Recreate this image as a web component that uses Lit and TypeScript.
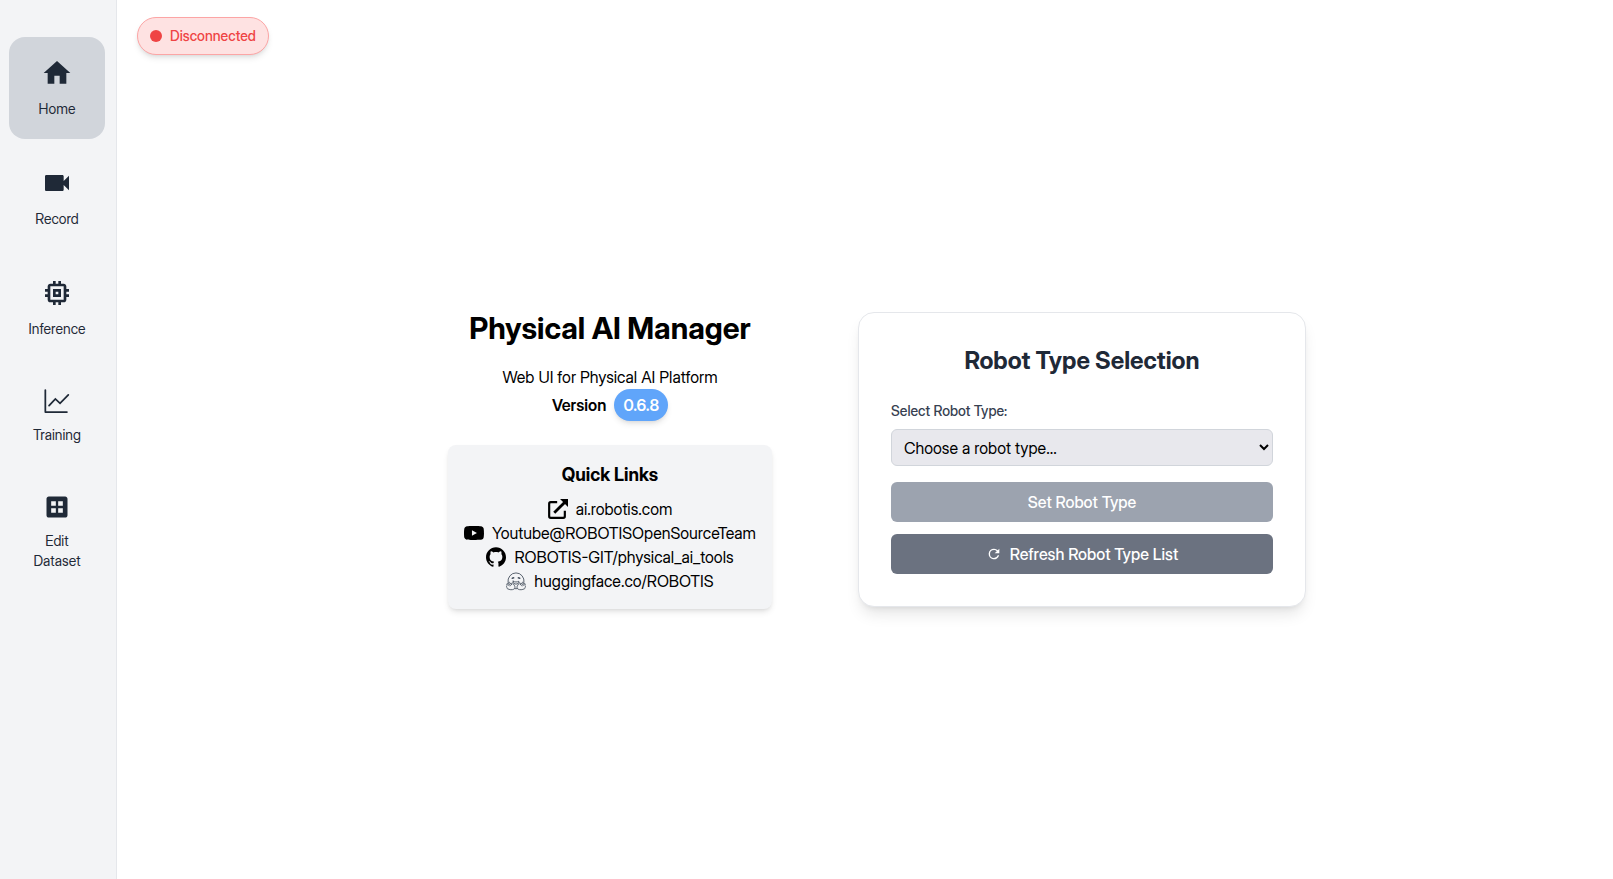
import { LitElement, html, css, svg } from "lit";
import { customElement, property, state } from "lit/decorators.js";
import { classMap } from "lit/directives/class-map.js";

const icons = {
  home: svg`<path d="M10 20v-6h4v6h5v-8h3L12 3 2 12h3v8z"/>`,
  record: svg`<path d="M17 10.500V7c0-.55-.45-1-1-1H4c-.55 0-1 .45-1 1v10c0 .55.45 1 1 1h12c.55 0 1-.45 1-1v-3.500l4 4v-11l-4 4z"/>`,
  inference: svg`<path d="M15 9H9v6h6V9zm-2 4h-2v-2h2v2zm8-2V9h-2V7c0-1.100-.9-2-2-2h-2V3h-2v2h-2V3H9v2H7c-1.100 0-2 .9-2 2v2H3v2h2v2H3v2h2v2c0 1.100.9 2 2 2h2v2h2v-2h2v2h2v-2h2c1.100 0 2-.9 2-2v-2h2v-2h-2v-2h2zm-4 6H7V7h10v10z"/>`,
  training: svg`<path d="M2 2.600V21.500H20.500" fill="none" stroke="currentColor" stroke-width="1.500" stroke-linecap="round" stroke-linejoin="round"/><path d="M5.200 16 10.600 10.200 14.600 14 21.700 6.700" fill="none" stroke="currentColor" stroke-width="1.500" stroke-linecap="round"/>`,
  dataset: svg`<path d="M19 3H5c-1.100 0-2 .9-2 2v14c0 1.100.9 2 2 2h14c1.100 0 2-.9 2-2V5c0-1.100-.9-2-2-2zm-8 14H7v-4h4v4zm0-6H7V7h4v4zm6 6h-4v-4h4v4zm0-6h-4V7h4v4z"/>`,
  external: svg`<path d="M11 3.800H3.200A1.800 1.800 0 0 0 1.400 5.600V20.800A1.800 1.800 0 0 0 3.200 22.600H18.400A1.800 1.800 0 0 0 20.200 20.800V14" fill="none" stroke="currentColor" stroke-width="2.600"/><path d="M7.500 16.500 20.500 3.500" stroke="currentColor" stroke-width="3.400" fill="none"/><path d="M14.500 0H24V9.500z"/>`,
  youtube: svg`<path d="M23.500 6.200a3 3 0 0 0-2.100-2.100C19.500 3.550 12 3.550 12 3.550s-7.500 0-9.400.5A3 3 0 0 0 .5 6.200C0 8.070 0 12 0 12s0 3.930.5 5.800a3 3 0 0 0 2.100 2.100c1.900.55 9.400.55 9.400.55s7.500 0 9.400-.5a3 3 0 0 0 2.100-2.150C24 15.930 24 12 24 12s0-3.930-.5-5.800zM9.550 15.200V8.800L15.500 12z"/>`,
  github: svg`<path d="M12 .297c-6.630 0-12 5.373-12 12 0 5.303 3.438 9.800 8.205 11.385.6.113.82-.258.82-.577 0-.285-.01-1.040-.015-2.040-3.338.724-4.042-1.610-4.042-1.610C4.422 18.070 3.633 17.700 3.633 17.700c-1.087-.744.084-.729.084-.729 1.205.084 1.838 1.236 1.838 1.236 1.070 1.835 2.809 1.305 3.495.998.108-.776.417-1.305.76-1.605-2.665-.3-5.466-1.332-5.466-5.930 0-1.310.465-2.380 1.235-3.220-.135-.303-.54-1.523.105-3.176 0 0 1.005-.322 3.300 1.230.96-.267 1.980-.399 3-.405 1.020.006 2.040.138 3 .405 2.280-1.552 3.285-1.230 3.285-1.230.645 1.653.24 2.873.12 3.176.765.84 1.230 1.910 1.230 3.220 0 4.610-2.805 5.625-5.475 5.920.42.36.81 1.096.81 2.220 0 1.606-.015 2.896-.015 3.286 0 .315.21.69.825.57C20.565 22.092 24 17.592 24 12.297c0-6.627-5.373-12-12-12"/>`,
  hugging: svg`<g fill="none" stroke="#4b5563" stroke-width="1.100" stroke-linecap="round" stroke-linejoin="round"><path d="M2.400 13.400A9.700 9.700 0 1 1 21.600 13.400M10.600 21.200h2.800"/><path d="M8.600 12.300c2 1.200 4.800 1.200 6.800 0-.2 2.200-1.500 3.400-3.400 3.400s-3.200-1.200-3.400-3.400z"/><path d="M7.600 8.700l1.500-.6M16.400 8.700l-1.500-.6" stroke-width="2"/><path d="M1.600 15.200c-1 .6-.9 1.600-.3 2.300-.8.5-.8 1.400-.2 2-.4.7-.1 1.300.6 1.700 2.600 1.500 5.800 1.700 7.700.6 1.500-.9 1.700-2.600.9-4L8.300 14.600c-.7-1-1.900-.5-1.600.8l.2 1.200L4.500 13.800c-.8-.9-1.900-.2-1.400.8M1.600 15.200 4 18M3.100 14.600l2.400 2.800"/><path d="M22.400 15.200c1 .6.900 1.600.3 2.300.8.5.8 1.400.2 2 .4.7.1 1.300-.6 1.700-2.600 1.500-5.800 1.700-7.700.6-1.500-.9-1.700-2.600-.9-4l2-3.200c.7-1 1.900-.5 1.600.8l-.2 1.200 2.400-2.800c.8-.9 1.900-.2 1.400.8M22.400 15.200 20 18M20.900 14.600l-2.400 2.800"/></g>`,
  refresh: svg`<path d="M17.650 6.350A7.958 7.958 0 0 0 12 4a8 8 0 1 0 7.730 10h-2.080A5.990 5.990 0 0 1 12 18a6 6 0 1 1 0-12c1.660 0 3.140.69 4.220 1.780L13 11h7V4l-2.350 2.350z"/>`,
};

type IconName = keyof typeof icons;

@customElement("app-icon")
class AppIcon extends LitElement {
  @property() name: IconName = "home";
  @property({ type: Number }) size = 20;

  static styles = css`
    :host { display: block; flex: none; }
    .icon { display: block; fill: currentColor; }
  `;

  render() {
    return html`<svg class="icon" width=${this.size} height=${this.size} viewBox="0 0 24 24" aria-hidden="true">${icons[this.name]}</svg>`;
  }
}

const pages: { label: string; icon: IconName; size: number }[] = [
  { label: "Home", icon: "home", size: 32 },
  { label: "Record", icon: "record", size: 32 },
  { label: "Inference", icon: "inference", size: 32 },
  { label: "Training", icon: "training", size: 28 },
  { label: "Edit Dataset", icon: "dataset", size: 28 },
];

const links: { label: string; icon: IconName; href: string }[] = [
  { label: "ai.robotis.com", icon: "external", href: "https://ai.robotis.com" },
  { label: "Youtube@ROBOTISOpenSourceTeam", icon: "youtube", href: "https://www.youtube.com/@ROBOTISOpenSourceTeam" },
  { label: "ROBOTIS-GIT/physical_ai_tools", icon: "github", href: "https://github.com/ROBOTIS-GIT/physical_ai_tools" },
  { label: "huggingface.co/ROBOTIS", icon: "hugging", href: "https://huggingface.co/ROBOTIS" },
];

@customElement("app-root")
class AppRoot extends LitElement {
  @state() private page = "Home";

  static styles = css`
    :host {
      display: flex;
      min-height: 100vh;
      background: #fff;
      color: #000;
      font-family: "Inter Display", Inter, "Liberation Sans", sans-serif;
      font-size: 16px;
      line-height: 24px;
    }
    * { box-sizing: border-box; }
    h1, h2, h3, p { margin: 0; }
    button, select { font: inherit; margin: 0; }
    .sidebar {
      flex: none;
      display: flex;
      flex-direction: column;
      gap: 8px;
      padding: 37px 11px 16px 9px;
      background: #f3f4f6;
      border-right: 1px solid #e5e7eb;
    }
    .nav-item {
      display: flex;
      flex-direction: column;
      align-items: center;
      gap: 10px;
      width: 96px;
      padding: 20px;
      border: 0;
      border-radius: 16px;
      background: transparent;
      color: #1f2937;
      font-size: 14px;
      line-height: 20px;
      cursor: pointer;
    }
    .nav-item.active { background: #d1d5db; }
    .main {
      flex: 1;
      display: flex;
      flex-direction: column;
      position: relative;
    }
    .status {
      position: absolute;
      top: 17px;
      left: 20px;
      display: flex;
      align-items: center;
      gap: 8px;
      padding: 8px 12px;
      border: 1px solid #fca5a5;
      border-radius: 19px;
      background: #fee2e2;
      color: #ef4444;
      font-size: 14px;
      font-weight: 500;
      line-height: 20px;
      box-shadow: 0 4px 6px -1px rgba(0, 0, 0, 0.1), 0 2px 4px -2px rgba(0, 0, 0, 0.1);
    }
    .dot { width: 12px; height: 12px; border-radius: 50%; background: #ef4444; }
    .content {
      flex: 1;
      display: flex;
      align-items: center;
      justify-content: center;
      gap: 86px;
      padding: 40px 0 0 24px;
    }
    .intro { display: flex; flex-direction: column; align-items: center; }
    .title { font-size: 30px; line-height: 36px; font-weight: 700; margin-bottom: 19px; }
    .version { display: flex; align-items: center; gap: 8px; font-weight: 600; }
    .badge {
      padding: 4px 9px;
      border-radius: 16px;
      background: #60a5fa;
      color: #fff;
      box-shadow: 0 4px 6px -1px rgba(0, 0, 0, 0.1), 0 2px 4px -2px rgba(0, 0, 0, 0.1);
    }
    .quick {
      display: flex;
      flex-direction: column;
      align-items: center;
      margin-top: 24px;
      padding: 16px;
      border-radius: 8px;
      background: #f3f4f6;
      box-shadow: 0 4px 6px -1px rgba(0, 0, 0, 0.1), 0 2px 4px -2px rgba(0, 0, 0, 0.1);
    }
    .quick-title { font-size: 18px; line-height: 28px; font-weight: 700; margin-bottom: 8px; }
    .link { display: flex; align-items: center; gap: 8px; color: inherit; text-decoration: none; }
    .card {
      width: 448px;
      display: flex;
      flex-direction: column;
      padding: 32px;
      border: 1px solid #e5e7eb;
      border-radius: 16px;
      background: #fff;
      box-shadow: 0 10px 15px -3px rgba(0, 0, 0, 0.1), 0 4px 6px -4px rgba(0, 0, 0, 0.1);
    }
    .card-title { margin-bottom: 24px; text-align: center; font-size: 24px; line-height: 32px; font-weight: 700; color: #1f2937; }
    .label { margin-bottom: 8px; font-size: 14px; line-height: 20px; font-weight: 500; color: #374151; }
    .select {
      width: 100%;
      height: 37px;
      margin-bottom: 16px;
      padding: 0 8px;
      border: 1px solid #d1d5db;
      border-radius: 6px;
      background-color: #e8e8ed;
      color: #000;
    }
    .action {
      display: flex;
      align-items: center;
      justify-content: center;
      gap: 8px;
      padding: 8px 16px;
      border: 0;
      border-radius: 6px;
      background: #6b7280;
      color: #fff;
      font-weight: 500;
    }
    .action:disabled { background: #9ca3af; }
    .action + .action { margin-top: 12px; }
  `;

  render() {
    return html`
      <nav class="sidebar">
        ${pages.map(
          (p) => html`<button
            class=${classMap({ "nav-item": true, active: this.page === p.label })}
            @click=${() => (this.page = p.label)}
          ><app-icon .name=${p.icon} .size=${p.size}></app-icon><span>${p.label}</span></button>`
        )}
      </nav>
      <main class="main">
        <div class="status" role="status"><span class="dot"></span>Disconnected</div>
        <div class="content">
          <section class="intro">
            <h1 class="title">Physical AI Manager</h1>
            <p>Web UI for Physical AI Platform</p>
            <div class="version">Version<span class="badge">0.6.8</span></div>
            <div class="quick">
              <h3 class="quick-title">Quick Links</h3>
              ${links.map((l) => html`<a class="link" href=${l.href}><app-icon .name=${l.icon}></app-icon>${l.label}</a>`)}
            </div>
          </section>
          <section class="card">
            <h2 class="card-title">Robot Type Selection</h2>
            <label class="label" for="robot-type">Select Robot Type:</label>
            <select class="select" id="robot-type"><option value="">Choose a robot type...</option></select>
            <button class="action" disabled>Set Robot Type</button>
            <button class="action"><app-icon name="refresh" .size=${16}></app-icon>Refresh Robot Type List</button>
          </section>
        </div>
      </main>
    `;
  }
}
